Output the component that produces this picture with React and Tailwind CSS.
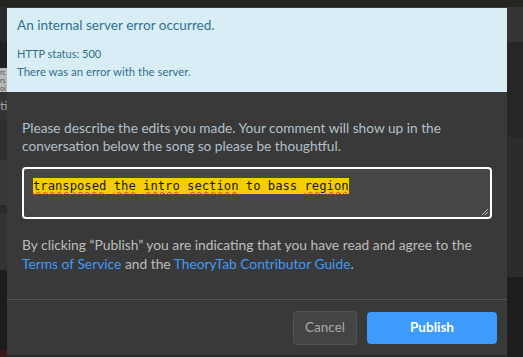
import React from 'react';

const font = { fontFamily: 'Lato, "Noto Sans", sans-serif' };

const Squiggle = ({ children }) => (
  <span className="underline decoration-wavy decoration-[#e0301e] decoration-1 underline-offset-[1px]">{children}</span>
);

const App = () => {
  return (
    <div className="relative w-[523px] h-[357px] overflow-hidden bg-[#262621]" style={font}>
      {/* page behind the modal */}
      <div className="flex flex-col h-full">
        <div className="h-[7px] bg-[#25251f]" />
        <div className="flex flex-1">
          <div className="w-[7px] flex flex-col text-[7px] leading-[8px] text-[#555] overflow-hidden">
            <div className="h-[35px] bg-[#2a2a2a]" />
            <div className="h-[26px] bg-[#222]" />
            <div className="h-[24px] bg-[#b9b9b9]">
              <div>rc</div>
              <div>rs</div>
              <div>oi</div>
            </div>
            <div className="h-[28px] bg-[#333] text-[#aaa] text-[12px] leading-[28px]">ti</div>
            <div className="h-[40px] bg-[#2d2d2d]" />
            <div className="h-[45px] bg-[#383838]" />
            <div className="h-[8px] bg-[#2a2a2a]" />
            <div className="h-[57px] bg-[#333]" />
            <div className="h-[80px] bg-[#1c1c1c]" />
            <div className="flex-1 bg-[#3a1a1a]" />
          </div>
          <div className="flex-1 bg-[#2a2a2a]" />
          <div className="w-[16px] flex flex-col">
            <div className="h-[35px] bg-[#333]" />
            <div className="h-[95px] bg-[#262626]" />
            <div className="h-[140px] bg-[#2c2c2c]" />
            <div className="flex-1 bg-[#1e1e1e]" />
          </div>
        </div>
      </div>

      {/* modal */}
      <div className="absolute left-[7px] top-[7px] w-[500px] h-[348px] bg-[#393939] flex flex-col pt-[1px]">
        <div className="h-[84px] bg-[#d9edf7] text-[#31708f] px-[10px] pt-[8px]">
          <div className="text-[13.6px] leading-[18px]">An internal server error occurred.</div>
          <div className="text-[11px] leading-[14px] mt-[13px]">HTTP status: 500</div>
          <div className="text-[11.4px] leading-[14px] mt-[4px]">There was an error with the server.</div>
        </div>

        <div className="px-[15px] pt-[27px] flex-1">
          <p className="text-[13.7px] leading-[18px] text-[#b3c0ca]">
            Please describe the edits you made. Your comment will show up in the conversation below the song so please be thoughtful.
          </p>
          <div className="mt-[12px] h-[52px] border-2 border-white rounded-[4px] bg-[#474747] px-[9px] pt-[3px] relative">
            <span
              className="bg-[#f5cd00] text-[#1a1a1a] text-[12.2px] leading-[15px] py-[1px]"
              style={{ fontFamily: '"DejaVu Sans Mono", monospace' }}
            >
              <Squiggle>transposed</Squiggle> <Squiggle>the</Squiggle> <Squiggle>intro</Squiggle>{' '}
              <Squiggle>section</Squiggle> to bass <Squiggle>region</Squiggle>
            </span>
            <svg className="absolute right-[1px] bottom-[1px]" width="8" height="8" viewBox="0 0 8 8">
              <path d="M7 1L1 7M7 4L4 7" stroke="#bbb" strokeWidth="1" />
            </svg>
          </div>
          <p className="mt-[16px] text-[13.8px] leading-[19px] text-[#bdbdbd]">
            By clicking “Publish” you are indicating that you have read and agree to the{' '}
            <a className="text-[#3d9bfc]">Terms of Service</a> and the{' '}
            <a className="text-[#3d9bfc]">TheoryTab Contributor Guide</a>.
          </p>
        </div>

        <div className="h-[56px] border-t border-[#555] flex items-center justify-end gap-[10px] pr-[10px]">
          <button className="w-[64px] h-[34px] rounded-[4px] bg-[#444] border border-[#555] text-[13.5px] text-[#a8a8a8]">
            Cancel
          </button>
          <button className="w-[130px] h-[32px] rounded-[4px] bg-[#3d9bfc] text-[13.5px] font-bold text-white">
            Publish
          </button>
        </div>
      </div>
    </div>
  );
};

export default App;
